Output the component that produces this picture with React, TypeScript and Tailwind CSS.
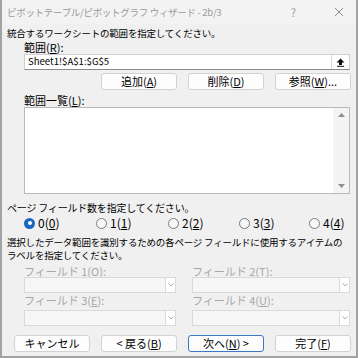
import React from "react";

const font = { fontFamily: '"Noto Sans CJK JP", "Noto Sans", sans-serif' };

function Btn({
  children,
  w,
  primary,
}: {
  children: React.ReactNode;
  w: string;
  primary?: boolean;
}) {
  return (
    <div
      className={`${w} flex h-[17px] items-center justify-center rounded-[3px] border bg-[#fdfdfd] text-[11px] leading-none text-black ${
        primary ? "border-[#3b78c4]" : "border-[#d2d2d2]"
      }`}
    >
      {children}
    </div>
  );
}

function Radio({ checked, label, w }: { checked?: boolean; label: React.ReactNode; w: string }) {
  return (
    <div className={`${w} flex items-center gap-[3px]`}>
      {checked ? (
        <span className="flex h-[11px] w-[11px] items-center justify-center rounded-full bg-[#1a67c0]">
          <span className="h-[4px] w-[4px] rounded-full bg-white" />
        </span>
      ) : (
        <span className="h-[11px] w-[11px] rounded-full border border-[#7a7a7a] bg-[#f7f7f7]" />
      )}
      <span className="text-[12px] leading-none text-black">{label}</span>
    </div>
  );
}

function Combo({ w }: { w: string }) {
  return (
    <div className={`${w} flex h-[16px] border border-[#dadada] bg-[#f6f6f6]`}>
      <div className="flex-1" />
      <div className="flex w-[10px] items-center justify-center border-l border-[#dadada] bg-white">
        <svg width="6" height="4" viewBox="0 0 6 4">
          <path d="M0.5 0.5 L3 3 L5.5 0.5" fill="none" stroke="#9a9a9a" strokeWidth="0.8" />
        </svg>
      </div>
    </div>
  );
}

export default function App() {
  return (
    <div style={font} className="flex h-[358px] w-[358px] flex-col overflow-hidden border-x-2 border-b-2 border-[#a3a3a3] bg-[#f0f0f0]">
      {/* Title bar */}
      <div className="flex h-[24px] shrink-0 items-center bg-[#f3f3f3] pl-[5px] pr-[12px] text-[9.5px] text-[#9a9a9a]">
        <span className="flex-1 tracking-[-0.3px]">ピボットテーブル/ピボットグラフ ウィザード - 2b/3</span>
        <span className="mr-[38px] text-[11px]">?</span>
        <svg width="10" height="10" viewBox="0 0 10 10">
          <path d="M1 1 L9 9 M9 1 L1 9" stroke="#8a8a8a" strokeWidth="1" />
        </svg>
      </div>

      <div className="flex flex-col pl-[5px] text-black">
        <div className="mt-[3px] flex h-[12px] items-center text-[9.5px] leading-[12px] tracking-[-0.2px]">
          統合するワークシートの範囲を指定してください。
        </div>
        <div className="ml-[17px] mt-[2px] flex h-[12px] items-center text-[11px] leading-[12px]">
          範囲(<u>R</u>):
        </div>
        <div className="ml-[17px] mt-[1px] flex h-[16px] w-[326px] items-center border border-[#cfcfcf] border-b-[#8a8a8a] bg-white">
          <span className="flex-1 pl-[3px] text-[9.6px] leading-none">Sheet1!$A$1:$G$5</span>
          <div className="flex h-full w-[18px] items-center justify-center border-l border-[#d8d8d8]">
            <svg width="9" height="9" viewBox="0 0 9 9">
              <path d="M4.5 0.5 L8.5 4.5 L6 4.5 L6 7 L3 7 L3 4.5 L0.5 4.5 Z" fill="#111" />
              <rect x="1" y="7.8" width="7" height="1" fill="#111" />
            </svg>
          </div>
        </div>

        <div className="mt-[3px] flex h-[17px] gap-[11px] pl-[94px]">
          <Btn w="w-[76px]">
            追加(<u>A</u>)
          </Btn>
          <Btn w="w-[76px]">
            削除(<u>D</u>)
          </Btn>
          <Btn w="w-[76px]">
            参照(<u>W</u>)...
          </Btn>
        </div>

        <div className="ml-[17px] mt-[4px] flex h-[12px] items-center text-[11px] leading-[12px]">
          範囲一覧(<u>L</u>):
        </div>
        <div className="ml-[17px] mt-[1px] flex h-[87px] w-[326px] border border-[#b9b9b9] bg-white">
          <div className="flex-1" />
          <div className="flex w-[16px] flex-col items-center justify-between bg-[#f4f4f4] py-[5px]">
            <svg width="7" height="4" viewBox="0 0 7 4">
              <path d="M0 4 L3.5 0 L7 4 Z" fill="#8f8f8f" />
            </svg>
            <svg width="7" height="4" viewBox="0 0 7 4">
              <path d="M0 0 L3.5 4 L7 0 Z" fill="#8f8f8f" />
            </svg>
          </div>
        </div>

        <div className="mt-[8px] flex h-[12px] items-center text-[10px] leading-[12px] tracking-[-0.2px]">
          ページ フィールド数を指定してください。
        </div>
        <div className="ml-[17px] mt-[3px] flex h-[12px] items-center">
          <Radio checked w="w-[72px]" label={<>0(<u>0</u>)</>} />
          <Radio w="w-[72px]" label={<>1(<u>1</u>)</>} />
          <Radio w="w-[71px]" label={<>2(<u>2</u>)</>} />
          <Radio w="w-[70px]" label={<>3(<u>3</u>)</>} />
          <Radio w="w-[40px]" label={<>4(<u>4</u>)</>} />
        </div>

        <div className="mt-[7px] flex flex-col text-[9.5px] leading-[13px] tracking-[-0.2px]">
          <span>選択したデータ範囲を識別するための各ページ フィールドに使用するアイテムの</span>
          <span>ラベルを指定してください。</span>
        </div>

        <div className="ml-[17px] mt-[3px] grid w-[326px] grid-cols-[152px_158px] gap-x-[16px] text-[11px] leading-[12px] text-[#a6a6a6]">
          <div className="flex h-[12px] items-center">
            フィールド 1(<u>O</u>):
          </div>
          <div className="flex h-[12px] items-center">
            フィールド 2(<u>T</u>):
          </div>
          <div>
            <Combo w="w-[152px]" />
          </div>
          <div>
            <Combo w="w-[158px]" />
          </div>
          <div className="mt-[1px] flex h-[12px] items-center">
            フィールド 3(<u>E</u>):
          </div>
          <div className="mt-[1px] flex h-[12px] items-center">
            フィールド 4(<u>U</u>):
          </div>
          <div className="mt-[4px]">
            <Combo w="w-[152px]" />
          </div>
          <div className="mt-[4px]">
            <Combo w="w-[158px]" />
          </div>
        </div>

        <div className="mt-[9px] flex h-[17px] gap-[11px] pl-[7px]">
          <Btn w="w-[76px]">キャンセル</Btn>
          <Btn w="w-[76px]">
            &lt; 戻る(<u>B</u>)
          </Btn>
          <Btn w="w-[76px]" primary>
            次へ(<u>N</u>) &gt;
          </Btn>
          <Btn w="w-[76px]">
            完了(<u>F</u>)
          </Btn>
        </div>
      </div>
    </div>
  );
}
